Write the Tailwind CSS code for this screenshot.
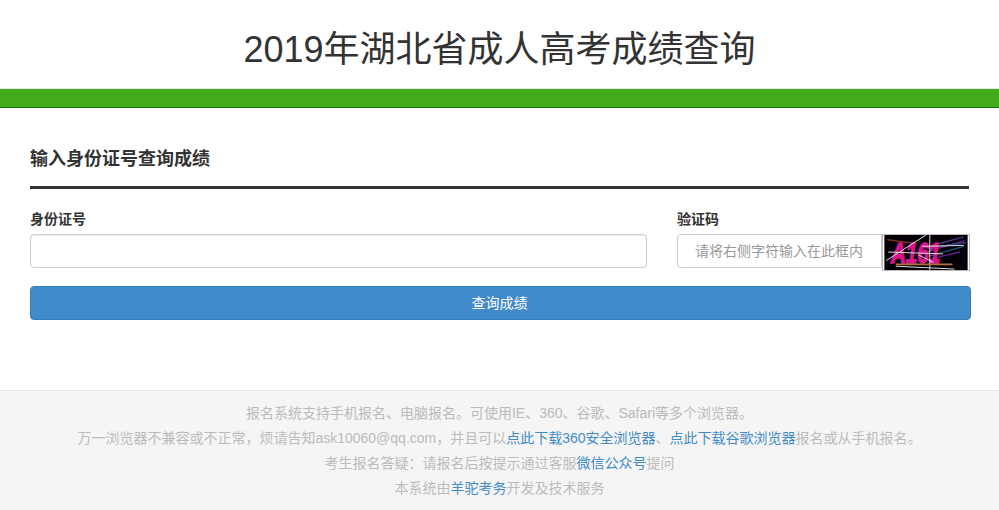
<!DOCTYPE html>
<html lang="zh-CN">

    <head>
        <meta charset="UTF-8">
        <meta name="viewport" content="width=device-width, initial-scale=1.0">
        <title>2019年湖北省成人高考成绩查询</title>
        <script src="https://cdn.jsdelivr.net/npm/@tailwindcss/browser@4"></script>
    </head>

    <body class="bg-white text-[#333] text-[14px] font-['Liberation_Sans','Noto_Sans_CJK_SC',sans-serif]">
        <header class="h-[89px] border-b border-[#e7e7e7] flex items-center justify-center">
            <h1 class="text-[36px] leading-[40px] text-[#333] font-normal mt-[12px]">2019年湖北省成人高考成绩查询</h1>
        </header>
        <div class="h-[19px] bg-[#42ab1c] border-b border-[#1a6e00]"></div>

        <main class="px-[30px] pt-[38px] h-[282px]">
            <h2 class="text-[18px] leading-[26px] font-bold text-[#333] pb-[14px] border-b-[3px] border-[#333]">输入身份证号查询成绩</h2>

            <div class="grid grid-cols-[617px_293px] gap-[30px] mt-[20px]">
                <div>
                    <label class="block text-[14px] leading-[20px] font-bold mb-[5px]">身份证号</label>
                    <input type="text" class="block w-full h-[34px] px-3 bg-white border border-[#ccc] rounded-[4px] shadow-[inset_0_1px_1px_rgba(0,0,0,0.075)]">
                </div>
                <div>
                    <label class="block text-[14px] leading-[20px] font-bold mb-[5px]">验证码</label>
                    <div class="flex items-start h-[34px]">
                        <input type="text" placeholder="请将右侧字符输入在此框内" class="block w-[205px] h-[34px] px-[17px] bg-white border border-[#ccc] rounded-l-[4px] text-[14px] placeholder:text-[#999]">
                        <svg width="88" height="37" viewBox="0 0 88 37" class="block shrink-0 border border-[#bbb]">
                            <rect width="88" height="37" fill="#050008"></rect>
                            <g stroke-width="1.5" opacity="0.85">
                                <line x1="40" y1="14" x2="84" y2="2" stroke="#5a3f9e"></line>
                                <line x1="44" y1="18" x2="85" y2="6" stroke="#7a2a8e"></line>
                                <line x1="48" y1="22" x2="84" y2="12" stroke="#2b5f8e"></line>
                                <line x1="50" y1="25" x2="80" y2="18" stroke="#6a2a9e"></line>
                                <line x1="3" y1="5" x2="34" y2="9" stroke="#8a3a20"></line>
                                <line x1="46" y1="14" x2="86" y2="8" stroke="#3b4f9e"></line>
                            </g>
                            <text x="7" y="30" font-family="Liberation Sans" font-size="31" font-weight="700" font-style="italic" textLength="52" lengthAdjust="spacingAndGlyphs" fill="#d6148c" stroke="#d6148c" stroke-width="1.5">A161</text>
                            <g stroke="#e8e8e0" stroke-width="1">
                                <line x1="2" y1="27" x2="44" y2="0"></line>
                                <line x1="48" y1="0" x2="48" y2="37"></line>
                                <line x1="4" y1="18" x2="62" y2="20"></line>
                                <line x1="40" y1="12" x2="84" y2="11"></line>
                                <line x1="36" y1="21" x2="52" y2="29"></line>
                                <line x1="12" y1="33" x2="74" y2="36"></line>
                            </g>
                            <line x1="12" y1="31" x2="72" y2="31" stroke="#a9743a" stroke-width="2"></line>
                        </svg>
                    </div>
                </div>
            </div>

            <button class="block w-[941px] h-[34px] mt-[18px] pr-[2px] bg-[#428bca] border border-[#357ebd] rounded-[4px] text-white text-[14px]">查询成绩</button>
        </main>

        <footer class="h-[120px] bg-[#f5f5f5] border-t border-[#e5e5e5] pt-[10px] text-center text-[14px] leading-[25px] text-[#bbb]">
            <p>报名系统支持手机报名、电脑报名。可使用IE、360、谷歌、Safari等多个浏览器。</p>
            <p>万一浏览器不兼容或不正常，烦请告知ask10060@qq.com，并且可以<a href="#" class="text-[#428bca]">点此下载360安全浏览器</a>、<a href="#" class="text-[#428bca]">点此下载谷歌浏览器</a>报名或从手机报名。</p>
            <p>考生报名答疑：请报名后按提示通过客服<a href="#" class="text-[#428bca]">微信公众号</a>提问</p>
            <p>本系统由<a href="#" class="text-[#428bca]">羊驼考务</a>开发及技术服务</p>
        </footer>
    </body>

</html>
